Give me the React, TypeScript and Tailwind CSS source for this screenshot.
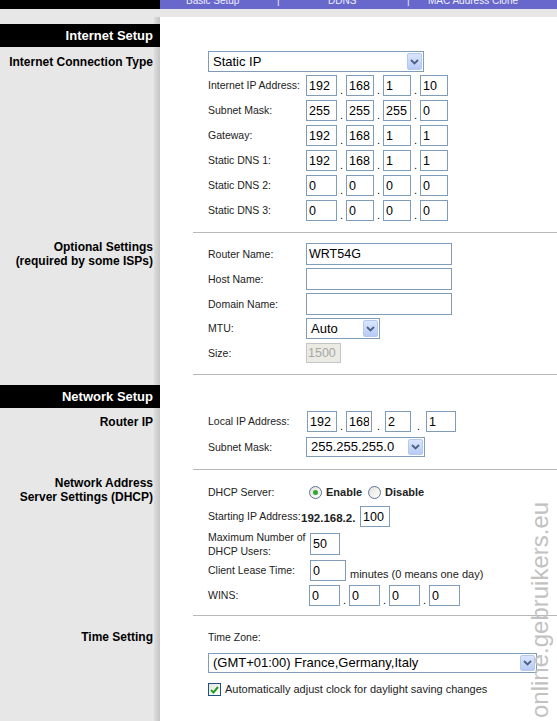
import React from 'react';

const FONT = "font-['Liberation_Sans',Arial,sans-serif]";

const Chevron = () => (
  <svg width="9" height="6" viewBox="0 0 9 6">
    <polyline points="1,1 4.5,4.5 8,1" fill="none" stroke="#4d6185" strokeWidth="1.8" />
  </svg>
);

const Select: React.FC<{ w: string; h?: string; text: string }> = ({ w, h = 'h-[21px]', text }) => (
  <div className={`flex items-center border border-[#7f9db9] bg-white ${w} ${h}`}>
    <span className="flex-1 truncate pl-[4px] text-[13px] leading-[16px] text-black">{text}</span>
    <span className="mr-[1px] flex h-[calc(100%-2px)] w-[15px] items-center justify-center rounded-[2px] border border-[#b4c8f0] bg-linear-to-b from-[#dbe6fd] to-[#b7cbf6]">
      <Chevron />
    </span>
  </div>
);

const Box: React.FC<{ w: string; h?: string; v?: string }> = ({ w, h = 'h-[21px]', v = '' }) => (
  <input
    readOnly
    value={v}
    className={`${w} ${h} border border-[#7f9db9] bg-white px-[2px] text-[12.5px] text-black outline-none`}
  />
);

const Dot: React.FC<{ w: string }> = ({ w }) => (
  <span className={`${w} self-end text-center text-[11px] leading-[12px] text-black`}>.</span>
);

const Label: React.FC<{ w?: string; children: React.ReactNode }> = ({ w = 'w-[98px]', children }) => (
  <span className={`${w} shrink-0 whitespace-nowrap text-[10.5px] leading-[13px] text-[#222]`}>{children}</span>
);

const IpRow: React.FC<{ label: string; vals: string[] }> = ({ label, vals }) => (
  <div className="flex h-[21px] items-center">
    <Label>{label}</Label>
    <Box w="w-[31px]" v={vals[0]} />
    <Dot w="w-[9px]" />
    <Box w="w-[28px]" v={vals[1]} />
    <Dot w="w-[9px]" />
    <Box w="w-[28px]" v={vals[2]} />
    <Dot w="w-[9px]" />
    <Box w="w-[28px]" v={vals[3]} />
  </div>
);

const Side: React.FC<{ children?: React.ReactNode; pt: string }> = ({ children, pt }) => (
  <div className="flex bg-[#e7e7e7]">
    <div className={`flex-1 pr-[1px] text-right text-[12px] font-bold leading-[14px] text-black ${pt}`}>{children}</div>
    <div className="w-[6px] bg-linear-to-r from-[#dedede] to-[#c4c4c4]" />
  </div>
);

const Header: React.FC<{ title: string; gap: string }> = ({ title, gap }) => (
  <div className="flex flex-col bg-[#e7e7e7]">
    <div className={`flex ${gap}`}>
      <div className="flex-1" />
      <div className="w-[6px] bg-linear-to-r from-[#dedede] to-[#c4c4c4]" />
    </div>
    <div className="flex h-[23px] items-center justify-end bg-black pr-[7px] text-[13px] font-bold text-white">
      {title}
    </div>
  </div>
);

const Radio: React.FC<{ on?: boolean }> = ({ on }) => (
  <span className="flex h-[13px] w-[13px] items-center justify-center rounded-full border border-[#5a7396] bg-linear-to-br from-[#e2e2dc] to-white">
    {on && <span className="h-[5px] w-[5px] rounded-full bg-[#2fa82f]" />}
  </span>
);

export default function App() {
  return (
    <div className={`relative flex h-[721px] w-[557px] flex-col overflow-hidden bg-[#e7e7e7] ${FONT}`}>
      {/* tab bar, scrolled so only the lower half shows */}
      <div className="flex h-[9px] shrink-0">
        <div className="w-[160px] bg-black" />
        <div className="flex-1 overflow-hidden bg-[#6868cc] text-[10px] leading-[10px] text-[#eeeeff]">
          <div className="-mt-[4px] flex whitespace-nowrap">
            <span className="w-[117px] pl-[26px]">Basic Setup</span>
            <span className="w-[51px]">|</span>
            <span className="w-[79px]">DDNS</span>
            <span className="w-[21px]">|</span>
            <span>MAC Address Clone</span>
          </div>
        </div>
      </div>
      <div className="h-[8px] shrink-0" />

      <div className="grid flex-1 grid-cols-[160px_1fr] grid-rows-[auto_auto_auto_auto_auto_auto_1fr]">
        {/* Internet Setup */}
        <Header title="Internet Setup" gap="h-[7px]" />
        <div className="bg-white" />

        <Side pt="pt-[8px]">Internet Connection Type</Side>
        <div className="bg-white pl-[33px]">
          <div className="border-b border-[#b8b8b8] pb-[11px] pl-[15px] pt-[4px]">
            <Select w="w-[216px]" text="Static IP" />
            <div className="mt-[3px] flex flex-col gap-[4px]">
              <IpRow label="Internet IP Address:" vals={['192', '168', '1', '10']} />
              <IpRow label="Subnet Mask:" vals={['255', '255', '255', '0']} />
              <IpRow label="Gateway:" vals={['192', '168', '1', '1']} />
              <IpRow label="Static DNS 1:" vals={['192', '168', '1', '1']} />
              <IpRow label="Static DNS 2:" vals={['0', '0', '0', '0']} />
              <IpRow label="Static DNS 3:" vals={['0', '0', '0', '0']} />
            </div>
          </div>
        </div>

        <Side pt="pt-[7px]">
          Optional Settings
          <br />
          (required by some ISPs)
        </Side>
        <div className="bg-white pl-[33px]">
          <div className="flex flex-col gap-[3px] border-b border-[#b8b8b8] pb-[11px] pl-[15px] pt-[10px]">
            <div className="flex items-center">
              <Label>Router Name:</Label>
              <Box w="w-[146px]" h="h-[22px]" v="WRT54G" />
            </div>
            <div className="flex items-center">
              <Label>Host Name:</Label>
              <Box w="w-[146px]" h="h-[22px]" />
            </div>
            <div className="flex items-center">
              <Label>Domain Name:</Label>
              <Box w="w-[146px]" h="h-[22px]" />
            </div>
            <div className="flex items-center">
              <Label>MTU:</Label>
              <Select w="w-[74px]" text="Auto" />
            </div>
            <div className="mt-[1px] flex items-center">
              <Label>Size:</Label>
              <input
                readOnly
                disabled
                value="1500"
                className="h-[20px] w-[35px] border border-[#c5c5c5] bg-[#ebebe4] px-[1px] text-[12.5px] text-[#a8a8a8]"
              />
            </div>
          </div>
        </div>

        {/* Network Setup */}
        <Header title="Network Setup" gap="h-[10px]" />
        <div className="bg-white" />

        <Side pt="pt-[7px]">Router IP</Side>
        <div className="bg-white pl-[33px]">
          <div className="flex flex-col gap-[5px] border-b border-[#b8b8b8] pb-[12px] pl-[15px] pt-[3px]">
            <div className="flex h-[21px] items-center">
              <Label w="w-[99px]">Local IP Address:</Label>
              <Box w="w-[30px]" v="192" />
              <Dot w="w-[9px]" />
              <Box w="w-[26px]" v="168" />
              <Dot w="w-[13px]" />
              <Box w="w-[26px]" v="2" />
              <Dot w="w-[15px]" />
              <Box w="w-[30px]" v="1" />
            </div>
            <div className="flex items-center">
              <Label>Subnet Mask:</Label>
              <Select w="w-[119px]" h="h-[20px]" text="255.255.255.0" />
            </div>
          </div>
        </div>

        <Side pt="pt-[6px]">
          Network Address
          <br />
          Server Settings (DHCP)
        </Side>
        <div className="bg-white pl-[33px]">
          <div className="flex flex-col border-b border-[#b8b8b8] pb-[9px] pl-[15px] pt-[14px]">
            <div className="flex h-[16px] items-center">
              <Label w="w-[101px]">DHCP Server:</Label>
              <Radio on />
              <span className="ml-[4px] text-[11px] font-bold text-[#222]">Enable</span>
              <span className="ml-[6px]">
                <Radio />
              </span>
              <span className="ml-[4px] text-[11px] font-bold text-[#222]">Disable</span>
            </div>
            <div className="mt-[6px] flex h-[21px] items-center">
              <Label w="w-[93px]">Starting IP Address:</Label>
              <span className="w-[59px] self-end whitespace-nowrap pb-[2px] text-[11.5px] font-bold leading-[13px] text-[#222]">
                192.168.2.
              </span>
              <Box w="w-[30px]" v="100" />
            </div>
            <div className="mt-[3px] flex h-[28px] items-center">
              <span className="w-[102px] shrink-0 whitespace-nowrap text-[10.5px] leading-[14px] text-[#222]">
                Maximum Number of
                <br />
                DHCP Users:
              </span>
              <Box w="w-[30px]" h="h-[22px]" v="50" />
            </div>
            <div className="mt-[2px] flex h-[21px] items-center">
              <Label w="w-[102px]">Client Lease Time:</Label>
              <Box w="w-[36px]" v="0" />
              <span className="ml-[4px] self-end text-[11px] leading-[13px] text-[#222]">minutes (0 means one day)</span>
            </div>
            <div className="mt-[4px] flex h-[21px] items-center">
              <Label w="w-[101px]">WINS:</Label>
              <Box w="w-[31px]" v="0" />
              <Dot w="w-[9px]" />
              <Box w="w-[31px]" v="0" />
              <Dot w="w-[9px]" />
              <Box w="w-[31px]" v="0" />
              <Dot w="w-[9px]" />
              <Box w="w-[31px]" v="0" />
            </div>
          </div>
        </div>

        <Side pt="pt-[14px]">Time Setting</Side>
        <div className="bg-white pl-[33px]">
          <div className="flex flex-col pl-[15px] pt-[14px]">
            <span className="text-[10.5px] leading-[14px] text-[#222]">Time Zone:</span>
            <div className="mt-[9px]">
              <Select w="w-[329px]" h="h-[20px]" text="(GMT+01:00) France,Germany,Italy" />
            </div>
            <div className="mt-[10px] flex items-center">
              <span className="flex h-[13px] w-[13px] items-center justify-center border border-[#1c5180] bg-linear-to-br from-[#e4e4de] to-white">
                <svg width="9" height="8" viewBox="0 0 9 8">
                  <polyline points="1,4 3.5,6.5 8,1" fill="none" stroke="#21a121" strokeWidth="2" />
                </svg>
              </span>
              <span className="ml-[4px] text-[11px] leading-[13px] text-[#222]">
                Automatically adjust clock for daylight saving changes
              </span>
            </div>
          </div>
        </div>
      </div>

      {/* watermark */}
      <div className="pointer-events-none absolute left-[527px] top-[718px] origin-top-left -rotate-90 whitespace-nowrap text-[24px] leading-[26px] text-[#c2c2c2]">
        online.gebruikers.eu
      </div>
    </div>
  );
}
